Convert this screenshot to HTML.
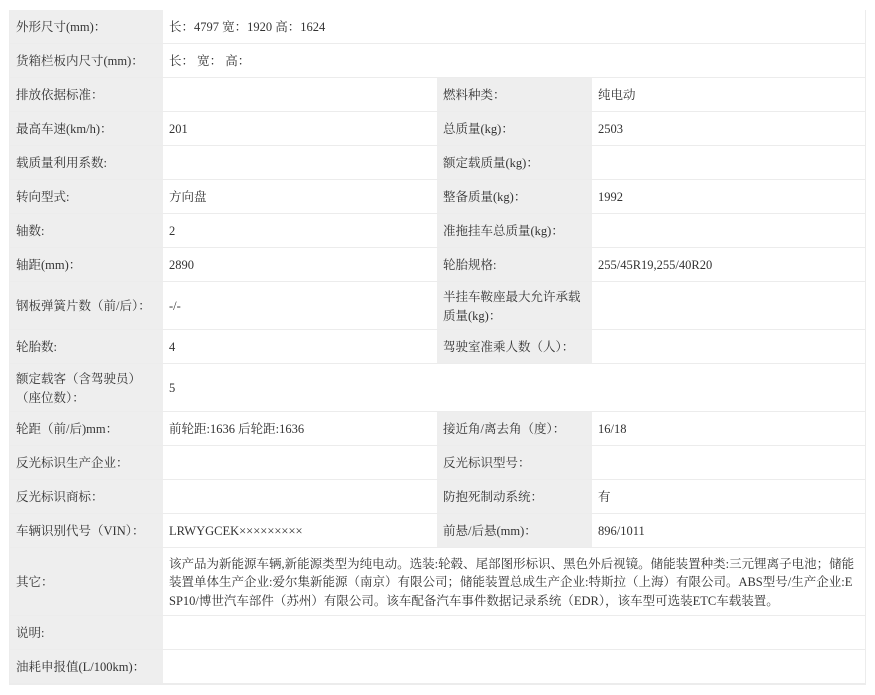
<!DOCTYPE html>
<html><head><meta charset="utf-8"><style>
html,body{margin:0;padding:0;background:#fff;width:875px;height:695px;overflow:hidden}
body{font-family:"Liberation Serif","Noto Serif CJK SC",serif;font-size:12.5px;color:#333}
.c{position:absolute;box-sizing:border-box;padding:2px 6px 0 6px;display:flex;align-items:center;line-height:18.5px;border-bottom:1px solid #ececec}
.l{background:#eeeeee}
.v{background:#fff}
.frame{position:absolute;left:9px;top:10px;width:857px;height:675px;border:1px solid #ececec;box-sizing:border-box}
</style></head><body>
<div class="frame"></div>
<div id="t"></div>
<script>
var rows=[
[10,44,["外形尺寸(mm)：","长：4797 宽：1920 高：1624"]],
[44,78,["货箱栏板内尺寸(mm)：","长： 宽： 高："]],
[78,112,["排放依据标准：","","燃料种类：","纯电动"]],
[112,146,["最高车速(km/h)：","201","总质量(kg)：","2503"]],
[146,180,["载质量利用系数:","","额定载质量(kg)：",""]],
[180,214,["转向型式:","方向盘","整备质量(kg)：","1992"]],
[214,248,["轴数:","2","准拖挂车总质量(kg)：",""]],
[248,282,["轴距(mm)：","2890","轮胎规格:","255/45R19,255/40R20"]],
[282,330,["钢板弹簧片数（前/后）：","-/-","半挂车鞍座最大允许承载质量(kg)：",""]],
[330,364,["轮胎数:","4","驾驶室准乘人数（人）：",""]],
[364,412,["额定载客（含驾驶员）<br>（座位数）：","5"]],
[412,446,["轮距（前/后)mm：","前轮距:1636 后轮距:1636","接近角/离去角（度）：","16/18"]],
[446,480,["反光标识生产企业：","","反光标识型号：",""]],
[480,514,["反光标识商标：","","防抱死制动系统：","有"]],
[514,548,["车辆识别代号（VIN）：","LRWYGCEK×××××××××","前悬/后悬(mm)：","896/1011"]],
[548,616,["其它：","该产品为新能源车辆,新能源类型为纯电动。选装:轮毂、尾部图形标识、黑色外后视镜。储能装置种类:三元锂离子电池；储能装置单体生产企业:爱尔集新能源（南京）有限公司；储能装置总成生产企业:特斯拉（上海）有限公司。ABS型号/生产企业:ESP10/博世汽车部件（苏州）有限公司。该车配备汽车事件数据记录系统（EDR），该车型可选装ETC车载装置。"]],
[616,650,["说明:",""]],
[650,684,["油耗申报值(L/100km)：",""]]
];
var h="";
rows.forEach(function(r){
 var t=r[0],b=r[1],c=r[2],ht=b-t;
 if(c.length==2){
  h+='<div class="c l" style="left:10px;top:'+t+'px;width:153px;height:'+ht+'px"><span>'+c[0]+'</span></div>';
  h+='<div class="c v" style="left:163px;top:'+t+'px;width:702px;height:'+ht+'px;word-break:break-all"><span>'+c[1]+'</span></div>';
 } else {
  h+='<div class="c l" style="left:10px;top:'+t+'px;width:153px;height:'+ht+'px"><span>'+c[0]+'</span></div>';
  h+='<div class="c v" style="left:163px;top:'+t+'px;width:274px;height:'+ht+'px"><span>'+c[1]+'</span></div>';
  h+='<div class="c l" style="left:437px;top:'+t+'px;width:155px;height:'+ht+'px"><span>'+c[2]+'</span></div>';
  h+='<div class="c v" style="left:592px;top:'+t+'px;width:273px;height:'+ht+'px"><span>'+c[3]+'</span></div>';
 }
});
document.getElementById('t').innerHTML=h;
</script>
</body></html>
